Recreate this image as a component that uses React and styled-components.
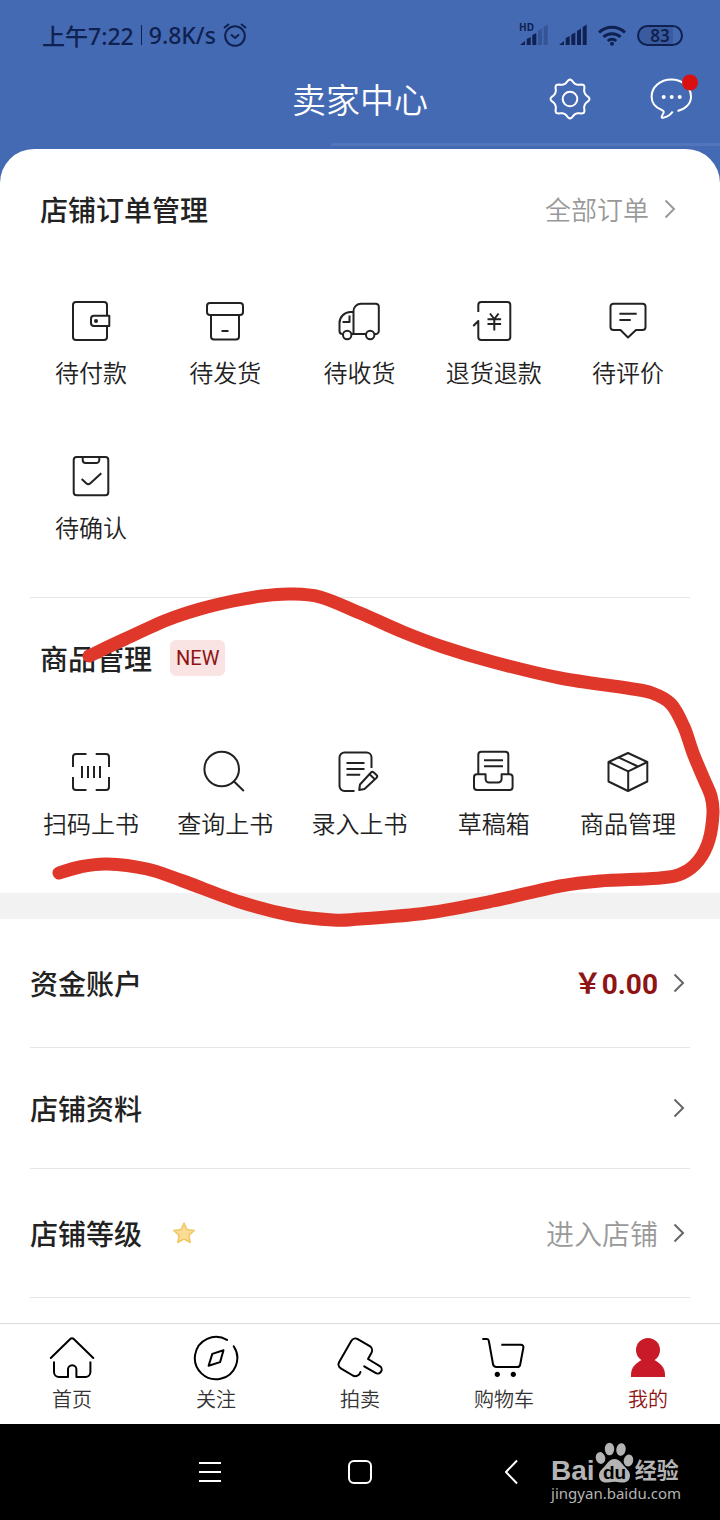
import React from "react";
import styled, { createGlobalStyle } from "styled-components";

const color = {
  blue: "#456ab4",
  blueLight: "#5275bc",
  status: "#0f2150",
  ink: "#222222",
  label: "#333333",
  muted: "#999999",
  line: "#e6e6e6",
  red: "#8f1414",
  mark: "#df382b",
};

const GlobalStyle = createGlobalStyle`
  *, *::before, *::after { box-sizing: border-box; }
  body {
    margin: 0;
    background: #000;
    color: ${color.ink};
    font-family: "Noto Sans CJK SC", sans-serif;
  }
  button {
    margin: 0; padding: 0; border: 0; background: none;
    font: inherit; color: inherit; cursor: pointer;
  }
  a { color: inherit; text-decoration: none; }
  svg { display: block; flex: none; }
`;

const Screen = styled.div`
  min-height: 100vh;
  display: flex;
  flex-direction: column;
  background: ${color.blue};
  overflow: hidden;
`;

/* ---------- status bar ---------- */

const StatusBar = styled.div`
  display: flex;
  align-items: center;
  justify-content: space-between;
  height: 70px;
  padding: 0 37px 0 42px;
  color: ${color.status};
  font-family: "Noto Sans", "Noto Sans CJK SC", sans-serif;
  font-size: 23px;
  font-weight: 500;
`;

const StatusGroup = styled.div`
  display: flex;
  align-items: center;
  gap: ${(p) => p.$gap}px;
`;

const StatusRule = styled.span`
  width: 1px;
  height: 20px;
  background: ${color.status};
`;

const Battery = styled.span`
  width: 46px;
  height: 21px;
  display: flex;
  align-items: center;
  justify-content: center;
  border: 2px solid ${color.status};
  border-radius: 11px;
  background: linear-gradient(90deg, #3a5b9f 80%, transparent 80%);
  font-size: 17px;
  line-height: 17px;
  font-weight: 600;
`;

/* ---------- header ---------- */

const Header = styled.header`
  display: grid;
  grid-template-columns: 1fr auto 1fr;
  align-items: center;
  height: 58px;
  padding: 0 25px;
  color: #fff;
`;

const Title = styled.h1`
  grid-column: 2;
  margin: 0;
  font-size: 34px;
  line-height: 48px;
  font-weight: 350;
`;

const HeaderActions = styled.div`
  display: flex;
  justify-content: flex-end;
  gap: 53px;
`;

const HeaderRule = styled.div`
  height: 3px;
  margin: 15px 0 3px 46%;
  background: ${color.blueLight};
`;

/* ---------- body sections ---------- */

const Sheet = styled.main`
  flex: 1;
  border-radius: 34px 34px 0 0;
  background: #fff;
`;

const Section = styled.section`
  position: relative;
  padding-top: 34px;
`;

const SectionHead = styled.div`
  display: flex;
  align-items: center;
  height: 52px;
  padding: 0 44px 0 40px;
`;

const Heading = styled.h2`
  margin: 0;
  font-size: 28px;
  line-height: 40px;
  font-weight: 500;
`;

const Badge = styled.span`
  margin-left: 18px;
  padding: 0 6px;
  border-radius: 6px;
  background: #fae3e3;
  color: ${color.red};
  font-family: Roboto, sans-serif;
  font-size: 20px;
  line-height: 36px;
`;

const MoreLink = styled.a`
  display: flex;
  align-items: center;
  gap: 15px;
  margin-left: auto;
  color: ${color.muted};
  font-size: 26px;
  line-height: 40px;
  font-weight: 350;
`;

const Grid = styled.div`
  display: grid;
  grid-template-columns: repeat(5, 1fr);
  row-gap: 64px;
  padding: ${(p) => p.$top}px 25px 54px 24px;
`;

const GridItem = styled.button`
  display: flex;
  flex-direction: column;
  align-items: center;
  gap: 11px;
  color: ${color.ink};
  font-size: 24px;
  line-height: 32px;
  font-weight: 350;
  white-space: nowrap;
`;

const Divider = styled.hr`
  height: 1px;
  margin: 0 30px;
  border: 0;
  background: ${color.line};
`;

const Band = styled.div`
  height: 26px;
  background: #f2f2f2;
`;

const Row = styled.a`
  display: flex;
  align-items: center;
  height: ${(p) => (p.$compact ? 121 : 129)}px;
  margin: 0 30px;
  padding-right: 5px;
  border-bottom: 1px solid ${color.line};
`;

const RowExtra = styled.span`
  margin-left: 30px;
`;

const RowValue = styled.span`
  display: flex;
  align-items: center;
  gap: 15px;
  margin-left: auto;
  color: ${color.muted};
  font-size: 28px;
  line-height: 40px;
  font-weight: 350;
`;

const Amount = styled.strong`
  color: ${color.red};
  font-family: Roboto, "Noto Sans CJK SC", sans-serif;
  font-weight: 700;
`;

const MarkLayer = styled.svg`
  position: absolute;
  top: -20px;
  left: 0;
  width: 100%;
  height: 355px;
  z-index: 1;
  pointer-events: none;
`;

/* ---------- bottom bars ---------- */

const TabBar = styled.nav`
  display: grid;
  grid-template-columns: repeat(5, 1fr);
  padding: 10px 0 13px;
  border-top: 1px solid #dcdcdc;
  background: #fff;
`;

const Tab = styled.a`
  display: flex;
  flex-direction: column;
  align-items: center;
  gap: 5px;
  color: ${(p) => (p.$active ? color.red : color.label)};
  font-size: 20px;
  line-height: 24px;
  font-weight: 350;

  svg { color: #000; }
`;

const SystemBar = styled.div`
  position: relative;
  display: flex;
  align-items: center;
  justify-content: center;
  gap: 102px;
  height: 96px;
  background: #000;
  color: #fff;
`;

const Watermark = styled.div`
  position: absolute;
  right: 39px;
  bottom: 20px;
  display: flex;
  flex-direction: column;
  color: #b4b4b4;
`;

const WatermarkLogo = styled.div`
  display: flex;
  align-items: flex-end;
  height: 45px;
  font-family: "Liberation Sans", "Noto Sans CJK SC", sans-serif;
  font-size: 28px;
  line-height: 30px;
  font-weight: 700;
`;

const WatermarkCn = styled.span`
  font-size: 22px;
`;

const WatermarkUrl = styled.span`
  font-family: "Noto Sans", sans-serif;
  font-size: 15px;
  line-height: 14px;
`;

/* ---------- icons ---------- */

const Icon = ({ children, size = 48, width = 2 }) => (
  <svg
    width={size}
    height={size}
    viewBox={`0 0 ${size} ${size}`}
    fill="none"
    stroke="currentColor"
    strokeWidth={width}
    strokeLinejoin="round"
    aria-hidden="true"
  >
    {children}
  </svg>
);

const Chevron = ({ stroke }) => (
  <svg width="12" height="20" viewBox="0 0 12 20" fill="none" stroke={stroke} strokeWidth="2" aria-hidden="true">
    <path d="M1.5 1.5 10 10l-8.500 8.500" />
  </svg>
);

const WalletIcon = () => (
  <Icon>
    <path d="M40 18.500V8a3 3 0 0 0-3-3H9a3 3 0 0 0-3 3v32a3 3 0 0 0 3 3h28a3 3 0 0 0 3-3V29" />
    <path d="M42.300 18.700H27a3 3 0 0 0-3 3V26a3 3 0 0 0 3 3h15.300z" />
    <circle cx="29" cy="24" r="2" fill="currentColor" stroke="none" />
  </Icon>
);

const ArchiveIcon = () => (
  <Icon>
    <rect x="6" y="6" width="36" height="12" rx="3" />
    <path d="M10 18v21.500a3 3 0 0 0 3 3h22a3 3 0 0 0 3-3V18M20.500 34h7" />
  </Icon>
);

const TruckIcon = () => (
  <Icon>
    <path d="M18.500 15h-3a11 11 0 0 0-11 11v8a3 3 0 0 0 3 3M16.500 37H31M39.500 37h1.300a3 3 0 0 0 3-3V9.700a3 3 0 0 0-3-3H26a7.500 7.500 0 0 0-7.500 7.500V37" />
    <path d="M14.500 18.500V25H7.500" />
    <circle cx="12.200" cy="38" r="4.200" />
    <circle cx="35.200" cy="38" r="4.200" />
  </Icon>
);

const RefundIcon = () => (
  <Icon>
    <path d="M8.300 15V8a3 3 0 0 1 3-3h26a3 3 0 0 1 3 3v32a3 3 0 0 1-3 3h-26a3 3 0 0 1-3-3V24l-5 5" />
    <path d="m20 16.500 4.300 5.500 4.300-5.500M24.300 22v11.500M17.500 22.300h13.600M17.500 27h13.600" />
  </Icon>
);

const CommentIcon = () => (
  <Icon>
    <path d="M9.500 6.700h29a3 3 0 0 1 3 3V30a3 3 0 0 1-3 3H32l-8 7.500-7.500-7.500h-7a3 3 0 0 1-3-3V9.700a3 3 0 0 1 3-3z" />
    <path d="M15.400 16.700h17.300M15.400 23h11.300" />
  </Icon>
);

const ConfirmIcon = () => (
  <Icon>
    <rect x="6.700" y="5" width="34.600" height="38.300" rx="3" />
    <path d="M15.700 5v3a3 3 0 0 0 3 3h10.600a3 3 0 0 0 3-3V5" />
    <path d="m14.700 27 4.500 4.200a3 3 0 0 0 4.200 0l10.900-10" />
  </Icon>
);

const ScanIcon = () => (
  <Icon>
    <path d="M6 19V9a3 3 0 0 1 3-3h10.500M28.700 6H39a3 3 0 0 1 3 3v10M42 29v10a3 3 0 0 1-3 3H28.700M19.500 42H9a3 3 0 0 1-3-3V29" />
    <path d="M15 18v12M21 18v12M27 18v12M33 18v12" />
  </Icon>
);

const SearchIcon = () => (
  <Icon>
    <circle cx="20.700" cy="21" r="17.300" />
    <path d="m32.800 33.300 10 9.700" />
  </Icon>
);

const RecordIcon = () => (
  <Icon>
    <path d="M36.500 20V9.500a5 5 0 0 0-5-5h-22a5 5 0 0 0-5 5V38a5 5 0 0 0 5 5h10" />
    <path d="M11.500 15h18M11.500 21h18M11.500 26.700h13.700" />
    <path d="m24.200 42 .8-5.500 11-12a2 2 0 0 1 2.800 0l2.700 2.400a2 2 0 0 1 .1 2.800L29.500 41z" />
    <path d="m34.600 26.300 5 4.800" />
  </Icon>
);

const DraftIcon = () => (
  <Icon>
    <path d="M8.300 26V6.700a3 3 0 0 1 3-3h24a3 3 0 0 1 3 3V26" />
    <path d="M14 12.300h19M14 18.200h19" />
    <path d="M7 26.200h8.600V31a3.500 3.500 0 0 0 3.500 3.500h9A3.500 3.500 0 0 0 31.600 31v-4.800h8a3 3 0 0 1 3 3V39a3 3 0 0 1-3 3H7a3 3 0 0 1-3-3v-9.800a3 3 0 0 1 3-3z" />
  </Icon>
);

const BoxIcon = () => (
  <Icon>
    <path d="m24 5 19.300 9v19.500L24 43 4.500 33.500V14z" />
    <path d="m4.500 14 19.700 9.300L43.300 14M24.200 23.300V43M14.500 9.300l19.500 9.200" />
  </Icon>
);

const HomeIcon = () => (
  <Icon>
    <path strokeLinecap="round" d="M2.800 24 22 5.200a3 3 0 0 1 4 0L45.300 24" />
    <path d="M6 27.500V38a5 5 0 0 0 5 5h9V35.500a4.200 4.200 0 0 1 8.400 0V43h9a5 5 0 0 0 5-5V27.500" />
  </Icon>
);

const CompassIcon = () => (
  <Icon>
    <path strokeLinecap="round" d="M35 5.900A21.200 21.200 0 1 0 41.700 12.300" />
    <path d="m31.500 16.300-11.200 3.600-3.700 11.900 11.500-3.700z" />
  </Icon>
);

const GavelIcon = () => (
  <Icon>
    <path
      strokeLinecap="round"
      d="m28.200 32.300 11.300 6.600a4 4 0 0 0 4.300-6.800L32 25l3.500-6.200a5 5 0 0 0-1.700-6.600L21.700 5.100a4.600 4.600 0 0 0-6.300 1.600L3.200 28a4.700 4.700 0 0 0 1.600 6.300l12 7.200a5.300 5.300 0 0 0 7.700-3.600"
    />
  </Icon>
);

const CartIcon = () => (
  <Icon>
    <path d="M2.300 5h4.500a2 2 0 0 1 2 1.700L13 30a3.600 3.600 0 0 0 3.600 3h20.600a3 3 0 0 0 3-2.500l3.200-17a2.400 2.400 0 0 0-2.400-2.800H21.300" />
    <circle cx="17.300" cy="40.300" r="2.600" fill="currentColor" stroke="none" />
    <circle cx="33.300" cy="40.300" r="2.600" fill="currentColor" stroke="none" />
  </Icon>
);

const UserIcon = () => (
  <Icon>
    <g fill="#c81a28" stroke="none">
      <circle cx="24" cy="16" r="12" />
      <path d="M7 43v-2.500c0-7 5-11.500 11-14.700h12c6 3.200 11 7.700 11 14.700V43z" />
    </g>
  </Icon>
);

// Closed eight-lobed outline for the settings cog.
const cogPath = (() => {
  const steps = 96;
  const points = Array.from({ length: steps }, (_, i) => {
    const a = (i / steps) * Math.PI * 2;
    const r = 17.4 + 1.8 * Math.cos(8 * a) + 0.3 * Math.cos(16 * a);
    return `${(24 + r * Math.sin(a)).toFixed(2)} ${(24 - r * Math.cos(a)).toFixed(2)}`;
  });
  return `M${points.join("L")}Z`;
})();

const CogIcon = () => (
  <Icon>
    <path d={cogPath} />
    <circle cx="24" cy="24" r="7.300" />
  </Icon>
);

const ChatIcon = () => (
  <Icon>
    <path d="M30.500 36C38.800 34 44 28.500 44 21.700c0-9.500-8.500-17.200-19.700-17.200S4.600 12.200 4.600 21.700c0 6 3.900 10.800 10.200 13.300 2.700 1 2.200 2.500.9 4.500-1.700 2.700-1.500 3.700 1 3.100 4.300-1.200 7.300-3.300 9-6.100" />
    <g fill="currentColor" stroke="none">
      <circle cx="16.700" cy="22" r="2" />
      <circle cx="24.700" cy="22" r="2" />
      <circle cx="32.700" cy="22" r="2" />
    </g>
    <circle cx="43" cy="7.500" r="8" fill="#d90f10" stroke="none" />
  </Icon>
);

const ChatButton = styled.button`
  svg { overflow: visible; }
`;

const AlarmIcon = () => (
  <Icon size={24}>
    <circle cx="12" cy="13" r="9.800" />
    <path d="m8 11.500 4 3.500 4-3.500M1 5 6 1M23 5l-5-4" />
  </Icon>
);

const fullBars = [
  "M0 21l5-4v4z",
  "M6.700 21v-7l4-2v9z",
  "M12.300 21V10.500l4-2V21z",
  "M18 21V7l4-2.500V21z",
  "M23.700 21V3l4-2.500V21z",
];
const hdBars = ["M0 21l5-4v4z", "M6.700 21v-6l4-2v8z", "M12.300 21V11l4-2v12z", fullBars[3], fullBars[4]];

const SignalIcon = ({ hd }) => (
  <svg width="28" height="24" viewBox="0 -1 28 24" fill="currentColor" overflow="visible" aria-hidden="true">
    {(hd ? hdBars : fullBars).map((d, i) => (
      <path key={d} d={d} opacity={hd && i > 2 ? 0.3 : 1} />
    ))}
    {hd && (
      <text x="-1" y="7" fontSize="10" fontWeight="700">
        HD
      </text>
    )}
  </svg>
);

const WifiIcon = () => (
  <svg width="28" height="21" viewBox="0 0 28 21" fill="none" stroke="currentColor" strokeWidth="3" aria-hidden="true">
    <path d="M1 7.500a19 19 0 0 1 26 0M5.500 12a12.500 12.500 0 0 1 17 0M9.700 16a6.200 6.200 0 0 1 8.600 0" />
    <circle cx="14" cy="18.800" r="2" fill="currentColor" stroke="none" />
  </svg>
);

const StarIcon = () => (
  <svg width="24" height="24" viewBox="0 0 24 24" fill="#fbdc94" stroke="#efc766" strokeWidth="1.500" strokeLinejoin="round" aria-hidden="true">
    <path d="m12 2 3 6.600 7.200.9-5.300 4.900 1.400 7.100L12 18l-6.300 3.500 1.400-7.100L1.800 9.500 9 8.600z" />
  </svg>
);

const PawLogo = () => (
  <svg width="40" height="45" viewBox="0 0 40 45" fill="#b4b4b4" aria-hidden="true">
    <ellipse cx="5.500" cy="17" rx="4.700" ry="6" transform="rotate(-12 5.500 17)" />
    <ellipse cx="14.500" cy="8" rx="4.700" ry="6.300" />
    <ellipse cx="26" cy="8.500" rx="4.700" ry="6.300" transform="rotate(10 26 8.500)" />
    <ellipse cx="33.500" cy="19.500" rx="4.700" ry="6" transform="rotate(14 33.500 19.500)" />
    <path d="M19.500 18c5 0 7 4 9.500 7s6 5 6 9.500-3 7-7 7c-3 0-5-.8-8.500-.8s-5.500.8-8.500.8c-4 0-7-2.500-7-7s3.500-6.500 6-9.500 4.500-7 9.500-7z" />
    <text x="19.500" y="38" textAnchor="middle" fontSize="19" fontWeight="700" fill="#000">
      du
    </text>
  </svg>
);

/* ---------- hand-drawn ring ---------- */

const ringPoints = [
  [89, 656], [125, 639], [167, 620], [200, 609], [233, 601], [262, 596], [290, 594], [320, 597], [360, 613],
  [403, 632], [443, 647], [493, 662], [560, 678], [627, 688], [652, 693], [671, 704], [684, 727],
  [693, 753], [703, 777], [711, 796], [713, 813], [709, 840], [699, 860], [683, 873], [660, 878],
  [600, 881], [560, 886], [493, 901], [427, 913], [360, 919], [333, 920], [290, 915], [240, 902],
  [183, 881], [147, 869], [107, 864], [80, 867], [59, 873],
];

// Catmull-Rom spline through the points, written as cubic segments.
const smoothPath = (pts) =>
  pts.slice(0, -1).reduce((d, p, i) => {
    const before = pts[i - 1] || p;
    const next = pts[i + 1];
    const after = pts[i + 2] || next;
    const c1 = [p[0] + (next[0] - before[0]) / 6, p[1] + (next[1] - before[1]) / 6];
    const c2 = [next[0] - (after[0] - p[0]) / 6, next[1] - (after[1] - p[1]) / 6];
    return `${d}C${c1.join(" ")} ${c2.join(" ")} ${next.join(" ")}`;
  }, `M${pts[0].join(" ")}`);

/* ---------- data ---------- */

const orderItems = [
  { label: "待付款", Glyph: WalletIcon },
  { label: "待发货", Glyph: ArchiveIcon },
  { label: "待收货", Glyph: TruckIcon },
  { label: "退货退款", Glyph: RefundIcon },
  { label: "待评价", Glyph: CommentIcon },
  { label: "待确认", Glyph: ConfirmIcon },
];

const goodsItems = [
  { label: "扫码上书", Glyph: ScanIcon },
  { label: "查询上书", Glyph: SearchIcon },
  { label: "录入上书", Glyph: RecordIcon },
  { label: "草稿箱", Glyph: DraftIcon },
  { label: "商品管理", Glyph: BoxIcon },
];

const tabs = [
  { label: "首页", Glyph: HomeIcon },
  { label: "关注", Glyph: CompassIcon },
  { label: "拍卖", Glyph: GavelIcon },
  { label: "购物车", Glyph: CartIcon },
  { label: "我的", Glyph: UserIcon, active: true },
];

const ItemGrid = ({ items, top }) => (
  <Grid $top={top}>
    {items.map(({ label, Glyph }) => (
      <GridItem key={label} type="button">
        <Glyph />
        {label}
      </GridItem>
    ))}
  </Grid>
);

export default function App() {
  return (
    <>
      <GlobalStyle />
      <Screen>
        <StatusBar>
          <StatusGroup $gap={7}>
            <span>上午7:22</span>
            <StatusRule />
            <span>9.8K/s</span>
            <AlarmIcon />
          </StatusGroup>
          <StatusGroup $gap={11}>
            <SignalIcon hd />
            <SignalIcon />
            <WifiIcon />
            <Battery>83</Battery>
          </StatusGroup>
        </StatusBar>

        <Header>
          <Title>卖家中心</Title>
          <HeaderActions>
            <button type="button" aria-label="设置">
              <CogIcon />
            </button>
            <ChatButton type="button" aria-label="消息">
              <ChatIcon />
            </ChatButton>
          </HeaderActions>
        </Header>
        <HeaderRule />

        <Sheet>
          <Section>
            <SectionHead>
              <Heading>店铺订单管理</Heading>
              <MoreLink href="#orders">
                全部订单
                <Chevron stroke={color.muted} />
              </MoreLink>
            </SectionHead>
            <ItemGrid items={orderItems} top={62} />
          </Section>
          <Divider />
          <Section>
            <SectionHead>
              <Heading>商品管理</Heading>
              <Badge>NEW</Badge>
            </SectionHead>
            <ItemGrid items={goodsItems} top={64} />
            <MarkLayer viewBox="0 578 720 355" preserveAspectRatio="none" aria-hidden="true">
              <path
                d={smoothPath(ringPoints)}
                fill="none"
                stroke={color.mark}
                strokeWidth="13"
                strokeLinecap="round"
                strokeLinejoin="round"
              />
            </MarkLayer>
          </Section>
          <Band />
          <Row href="#funds">
            <Heading>资金账户</Heading>
            <RowValue>
              <span>
                <Amount>￥0.00</Amount>
              </span>
              <Chevron stroke="#666666" />
            </RowValue>
          </Row>
          <Row href="#profile" $compact>
            <Heading>店铺资料</Heading>
            <RowValue>
              <Chevron stroke="#666666" />
            </RowValue>
          </Row>
          <Row href="#level">
            <Heading>店铺等级</Heading>
            <RowExtra>
              <StarIcon />
            </RowExtra>
            <RowValue>
              进入店铺
              <Chevron stroke="#666666" />
            </RowValue>
          </Row>
        </Sheet>

        <TabBar>
          {tabs.map(({ label, Glyph, active }) => (
            <Tab key={label} href={`#${label}`} $active={active} aria-current={active ? "page" : undefined}>
              <Glyph />
              {label}
            </Tab>
          ))}
        </TabBar>

        <SystemBar>
          <button type="button" aria-label="菜单">
            <Icon>
              <path d="M13 15h22M13 24h22M13 33h22" />
            </Icon>
          </button>
          <button type="button" aria-label="主屏幕">
            <Icon>
              <rect x="13" y="13" width="22" height="22" rx="5" />
            </Icon>
          </button>
          <button type="button" aria-label="返回">
            <Icon>
              <path d="M31 12.500 20 24l11 11.500" />
            </Icon>
          </button>
          <Watermark>
            <WatermarkLogo>
              Bai
              <PawLogo />
              <WatermarkCn>经验</WatermarkCn>
            </WatermarkLogo>
            <WatermarkUrl>jingyan.baidu.com</WatermarkUrl>
          </Watermark>
        </SystemBar>
      </Screen>
    </>
  );
}
